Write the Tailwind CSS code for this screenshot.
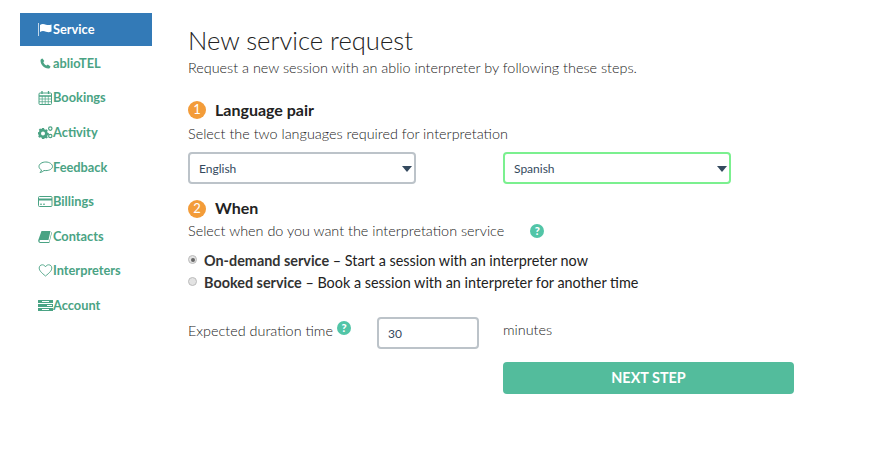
<!DOCTYPE html>
<html lang="en">
<head>
  <meta charset="UTF-8" />
  <title>New service request</title>
  <meta name="viewport" content="width=device-width, initial-scale=1.0" />
  <script src="https://cdn.jsdelivr.net/npm/@tailwindcss/browser@4"></script>
</head>
<body class="bg-white font-['Lato',sans-serif] text-[#222] h-[464px] overflow-hidden">
  <div class="flex">

    <!-- Sidebar -->
    <nav class="w-[132px] ml-5 mt-[13px] shrink-0 text-[12.8px] font-bold text-[#4aa384]">
      <a class="flex items-center h-[33px] pl-[18px] bg-[#337ab7] text-white">
        <svg class="w-[15px] h-[13px] shrink-0" viewBox="0 0 15 13" fill="currentColor"><rect x="0" y="0" width="1" height="13" opacity=".7"/><path d="M2 2c2-1.500 4-1 6-.3 2 .6 3.500.6 5.500-.3v7c-2 1-3.500 1-5.500.3-2-.7-4-1-6 .3z"/></svg>
        <span>Service</span>
      </a>
      <a class="flex items-center h-[34.500px] pl-[20px] mt-[0.300px]">
        <svg class="w-[11px] h-[11px] shrink-0 mr-[2px]" viewBox="0 0 11 11" fill="currentColor"><path d="M2.500.5 4.300 3 3.300 4.300c.6 1.400 1.700 2.500 3.200 3.300L7.800 6.600l2.700 1.800c-.2 1.200-1 2.100-2.200 2.100C4 10.500.5 6.500.5 2.500.5 1.500 1.300.7 2.500.5z"/></svg>
        <span>ablioTEL</span>
      </a>
      <a class="flex items-center h-[34.500px] pl-[18px]">
        <svg class="w-[15px] h-[14px] shrink-0" viewBox="0 0 15 14" fill="none" stroke="currentColor"><rect x="1" y="2" width="12.500" height="11.500" rx="1"/><path d="M1 5h12.500" stroke-width="1.500"/><path d="M1 8h12.500M1 10.700h12.500M4.200 5v8.500M7.200 5v8.500M10.300 5v8.500" stroke-width=".7"/><path d="M4 0v3M10.500 0v3" stroke-width="1.300"/></svg>
        <span>Bookings</span>
      </a>
      <a class="flex items-center h-[34.500px] pl-[18px]">
        <svg class="w-[15px] h-[13px] shrink-0" viewBox="0 0 15 13" fill="currentColor"><path fill-rule="evenodd" d="M4 2h2l.3 1.200 1.200.6 1.100-.6 1.200 1.300-.6 1.100.4 1.200 1.200.3v1.800l-1.200.3-.4 1.100.6 1.100-1.200 1.200-1.100-.6-1.200.5L6 13H4l-.3-1.300-1.200-.5-1.100.6L.2 10.600l.6-1.100-.4-1.100L0 8.100V6.300l1-.3.400-1.200-.6-1.100L2 2.400l1.100.6 .7-.3zM5 5.500a2 2 0 1 0 0 4 2 2 0 0 0 0-4z"/><circle cx="12.300" cy="2.600" r="1.700" fill="none" stroke="currentColor" stroke-width="1.200"/><circle cx="12.300" cy="10" r="1.700" fill="none" stroke="currentColor" stroke-width="1.200"/></svg>
        <span>Activity</span>
      </a>
      <a class="flex items-center h-[34.500px] pl-[18px] pt-[1px]">
        <svg class="w-[15px] h-[13px] shrink-0" viewBox="0 0 15 13" fill="none" stroke="currentColor" stroke-width="1"><path d="M7.800 1C4 1 1 3 1 5.500c0 1.500 1 2.700 2.500 3.500-.2 1-.8 1.800-1.500 2.500 1.500-.2 3-1 4-2 .6.100 1.200.1 1.800.1 3.700 0 6.700-1.800 6.700-4.100S11.500 1 7.800 1z"/></svg>
        <span>Feedback</span>
      </a>
      <a class="flex items-center h-[34.500px] pl-[18px]">
        <svg class="w-[15px] h-[11px] shrink-0" viewBox="0 0 15 11" fill="none" stroke="currentColor"><rect x=".5" y=".5" width="13.500" height="10" rx="1"/><path d="M.5 3.500h13.500" stroke-width="2"/><path d="M2 8.200h2M5 8.200h2"/></svg>
        <span>Billings</span>
      </a>
      <a class="flex items-center h-[34.500px] pl-[18px] pt-[1px]">
        <svg class="w-[15px] h-[12px] shrink-0" viewBox="0 0 15 12" fill="currentColor"><path d="M3.500 0H12.500L10.500 9H2.500C1.800 9 1.500 9.500 1.500 10s.4 1 1 1h8.500l2.500-10 .5.500L11.300 12H2.300C1 12 .2 11 .2 9.800c0-.3 0-.6.1-.9z"/></svg>
        <span>Contacts</span>
      </a>
      <a class="flex items-center h-[34.500px] pl-[18px]">
        <svg class="w-[15px] h-[13px] shrink-0" viewBox="0 0 14 13" fill="none" stroke="currentColor" stroke-width=".9"><path d="M7 12C3 8.800.7 6.600.7 4 .7 2.200 2 .8 3.800.8 5.100.8 6.300 1.500 7 2.800 7.700 1.500 8.900.8 10.200.8 12 .8 13.300 2.200 13.300 4c0 2.600-2.300 4.800-6.300 8z"/></svg>
        <span>Interpreters</span>
      </a>
      <a class="flex items-center h-[34.500px] pl-[18px] pt-[1px]">
        <svg class="w-[15px] h-[11px] shrink-0" viewBox="0 0 15 11" fill="currentColor"><path d="M0 0h15v3H0zM0 4h15v3H0zM0 8h15v3H0z"/><path d="M4 1h7v1H4zM9 5h5v1H9zM4 9h7v1H4z" fill="white"/></svg>
        <span>Account</span>
      </a>
    </nav>

    <!-- Main -->
    <main class="ml-9 mt-[24px] w-[606px]">
      <h1 class="text-[25.600px] leading-8 font-light text-[#222]">New service request</h1>
      <p class="text-[14.400px] font-light leading-5 mt-[2px]">Request a new session with an ablio interpreter by following these steps.</p>

      <h2 class="flex items-center mt-[22px] h-5 text-[16px] font-bold text-[#222]">
        <span class="w-[18px] h-[18px] rounded-full bg-[#f39c39] text-white text-[13px] font-normal flex items-center justify-center mr-[9px]">1</span>
        Language pair
      </h2>
      <p class="text-[14.400px] font-light leading-5 mt-[4px]">Select the two languages required for interpretation</p>

      <div class="grid grid-cols-[228px_228px] gap-x-[87px] mt-[8px]">
        <div class="relative h-8 border-2 border-[#bcc3c9] rounded-[4px] flex items-center pl-[9px] pt-[2px] text-[12px] text-[#34495e]">
          English
          <span class="absolute right-[2px] top-[12px] border-x-[5px] border-x-transparent border-t-[6px] border-t-[#34495e]"></span>
        </div>
        <div class="relative h-8 border-2 border-[#7bf08f] rounded-[4px] flex items-center pl-[9px] pt-[2px] text-[12px] text-[#34495e]">
          Spanish
          <span class="absolute right-[2px] top-[12px] border-x-[5px] border-x-transparent border-t-[6px] border-t-[#34495e]"></span>
        </div>
      </div>

      <h2 class="flex items-center mt-[14px] h-5 text-[16px] font-bold text-[#222]">
        <span class="w-[18px] h-[18px] translate-y-[1px] rounded-full bg-[#f39c39] text-white text-[13px] font-normal flex items-center justify-center mr-[9px]">2</span>
        When
      </h2>
      <div class="flex items-center mt-[3px] h-5 text-[14.400px] font-light">
        <span>Select when do you want the interpretation service</span>
        <span class="ml-[26px] w-[14px] h-[14px] rounded-full bg-[#52c5a7] text-white text-[11px] font-black flex items-center justify-center">?</span>
      </div>

      <div class="mt-[10px] text-[14.400px] leading-5 space-y-[2px] font-light">
        <label class="flex items-center">
          <span class="w-[9px] h-[9px] -mt-[3px] rounded-full bg-[#e3e3e3] border border-[#bbb] flex items-center justify-center mr-[7px]"><span class="w-[4px] h-[4px] rounded-full bg-[#666]"></span></span>
          <span class="font-normal"><b class="font-bold text-[#333]">On-demand service</b> – Start a session with an interpreter now</span>
        </label>
        <label class="flex items-center">
          <span class="w-[9px] h-[9px] -mt-[3px] rounded-full bg-[#e3e3e3] border border-[#bbb] mr-[7px]"></span>
          <span class="font-normal"><b class="font-bold text-[#333]">Booked service</b> – Book a session with an interpreter for another time</span>
        </label>
      </div>

      <div class="flex items-center mt-[24px] text-[14.400px] font-light">
        <span class="w-[189px] flex items-start shrink-0 mb-[4px]">Expected duration time <span class="ml-[4px] mt-[1px] w-[14px] h-[14px] rounded-full bg-[#52c5a7] text-white text-[11px] font-black flex items-center justify-center">?</span></span>
        <div class="w-[102px] h-8 border-2 border-[#bcc3c9] rounded-[4px] flex items-center pl-[9px] pt-[1px] text-[12px] font-normal text-[#34495e] shrink-0">30</div>
        <span class="ml-[24px] mb-[6px]">minutes</span>
      </div>

      <button class="block w-[291px] h-8 ml-[315px] mt-[13px] bg-[#53bc9c] rounded-[4px] text-white text-[14.400px] font-bold">NEXT STEP</button>
    </main>
  </div>
</body>
</html>
